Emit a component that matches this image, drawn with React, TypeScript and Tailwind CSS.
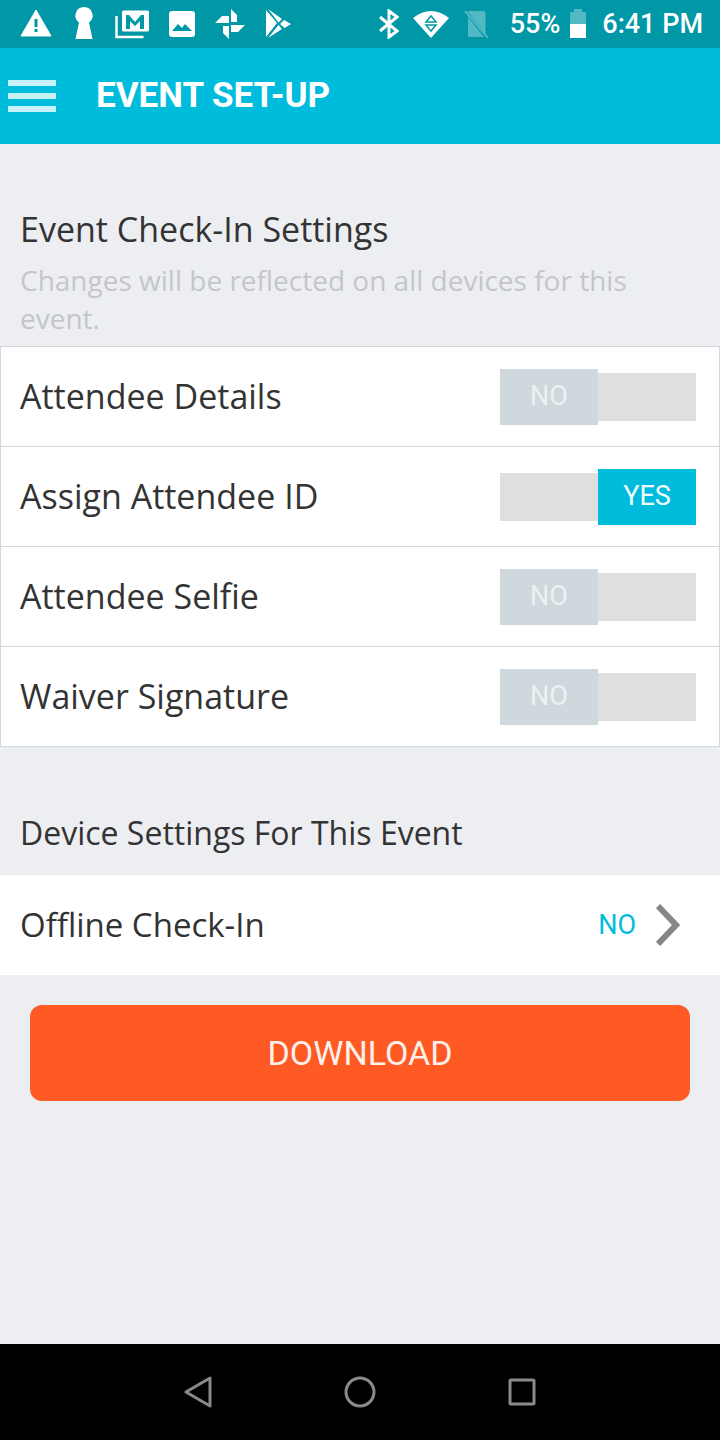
const sans = "font-['Open_Sans','Noto_Sans',sans-serif]";

function StatusIcons() {
  return (
    <div className="flex items-center">
      <svg width="32" height="30" viewBox="0 0 32 30" className="ml-[20px]">
        <path d="M16 1 31 27H1Z" fill="#fff" stroke="#fff" strokeLinejoin="round" />
        <rect x="14.5" y="10" width="3" height="8" fill="#0097a7" />
        <rect x="14.5" y="20" width="3" height="3" fill="#0097a7" />
      </svg>
      <svg width="20" height="34" viewBox="0 0 20 34" className="ml-[22px]">
        <path d="M10 0a8.5 8.5 0 0 1 5 15.4L18.500 32H1.500L5 15.400A8.500 8.500 0 0 1 10 0Z" fill="#fff" />
      </svg>
      <svg width="36" height="30" viewBox="0 0 36 30" className="ml-[21px]">
        <path d="M1.500 7v21h27" fill="none" stroke="#fff" strokeWidth="2.500" />
        <rect x="7" y="1.500" width="27" height="21" rx="1.500" fill="#fff" />
        <path d="M11 20V6h3l6 7 6-7h3v14h-4v-8l-5 5-5-5v8Z" fill="#0097a7" />
      </svg>
      <svg width="26" height="26" viewBox="0 0 26 26" className="ml-[18px]">
        <rect width="26" height="26" rx="3" fill="#fff" />
        <path d="M3 20l6-7 4 4 3-4 7 7Z" fill="#0097a7" />
      </svg>
      <svg width="30" height="30" viewBox="0 0 30 30" className="ml-[20px]">
        <path d="M0 14 7 7h7v7ZM16 0l6 6v7h-6ZM30 16l-7 7h-7v-7ZM14 30l-6-6v-7h6Z" fill="#fff" />
      </svg>
      <svg width="26" height="30" viewBox="0 0 26 30" className="ml-[20px]">
        <path d="M1 1 12 14 1 28ZM3 0l14 10-3.500 3.500ZM19 11l7 4-6.500 4-4.500-4ZM3 29l14-9-3.500-4Z" fill="#fff" />
      </svg>
    </div>
  );
}

function StatusRight() {
  return (
    <div className="flex items-center">
      <svg width="20" height="30" viewBox="0 0 20 30" fill="none" stroke="#fff" strokeWidth="3">
        <path d="M1 8l17 14-8 6V2l8 6L1 22" />
      </svg>
      <svg width="36" height="28" viewBox="0 0 36 28" className="ml-[14px]">
        <path d="M0 8Q18-6 36 8L18 28Z" fill="#fff" />
        <path d="M13 12l5-6 5 6ZM13 15l5 6 5-6Z" fill="none" stroke="#0097a7" strokeWidth="1.500" />
      </svg>
      <svg width="26" height="28" viewBox="0 0 26 28" className="ml-[15px]">
        <path d="M4 2a1.500 1.500 0 0 1 1.500-1H20a1.500 1.500 0 0 1 1.500 1.500v21ZM4 7v19a1 1 0 0 0 1 1h15Z" fill="#fff" fillOpacity="0.32" />
        <path d="M1 1l23 27" stroke="#fff" strokeOpacity="0.32" strokeWidth="2" />
      </svg>
      <span className="ml-[20px] font-['Roboto',sans-serif] text-[27px] font-medium text-white">55%</span>
      <svg width="16" height="30" viewBox="0 0 16 30" className="ml-[10px]">
        <path d="M4 0h8v3h4v12H0V3h4Z" fill="#fff" fillOpacity="0.32" />
        <rect y="15" width="16" height="14" fill="#fff" />
      </svg>
      <span className="ml-[16px] mr-[17px] font-['Roboto',sans-serif] text-[27px] font-medium text-white">6:41 PM</span>
    </div>
  );
}

function Toggle({ on }: { on: boolean }) {
  return (
    <div className="flex h-[56px] w-[196px] items-center">
      {on ? (
        <>
          <div className="h-[48px] w-[98px] bg-[#dfdfdf]" />
          <div className="flex h-[56px] w-[98px] items-center justify-center bg-[#00bcdc] font-['Roboto',sans-serif] text-[27px] text-[#f4fbfd]">YES</div>
        </>
      ) : (
        <>
          <div className="flex h-[56px] w-[98px] items-center justify-center bg-[#cfd8dc] font-['Roboto',sans-serif] text-[27px] text-[#eef1f2]">NO</div>
          <div className="h-[48px] w-[98px] bg-[#dfdfdf]" />
        </>
      )}
    </div>
  );
}

function Row({ label, on }: { label: string; on?: boolean }) {
  return (
    <div className="-mt-px flex h-[101px] items-center justify-between border border-[#cfd8dc] bg-white pl-[19px] pr-[23px] first:mt-0">
      <span className="text-[34px] text-[#333333]">{label}</span>
      <Toggle on={!!on} />
    </div>
  );
}

export default function App() {
  return (
    <div className={`flex h-[1440px] w-[720px] flex-col overflow-hidden bg-[#eceef2] ${sans}`}>
      <div className="flex h-[48px] shrink-0 items-center justify-between bg-[#0097a7]">
        <StatusIcons />
        <StatusRight />
      </div>

      <div className="flex h-[96px] shrink-0 items-center bg-[#00bcdc]">
        <div className="ml-[8px] flex w-[48px] flex-col gap-[7px]">
          <div className="h-[6px] bg-[#c9f1f8]" />
          <div className="h-[6px] bg-[#c9f1f8]" />
          <div className="h-[6px] bg-[#c9f1f8]" />
        </div>
        <h1 className="ml-[40px] font-['Roboto',sans-serif] text-[35px] font-bold text-white">EVENT SET-UP</h1>
      </div>

      <main className="flex flex-1 flex-col">
        <h2 className="mt-[62px] ml-[20px] text-[34px] leading-[46px] text-[#333333]">Event Check-In Settings</h2>
        <p className="mt-[9px] ml-[20px] mb-[9px] w-[660px] text-[28px] leading-[38px] text-[#c4c6c8]">
          Changes will be reflected on all devices for this event.
        </p>

        <div className="flex flex-col">
          <Row label="Attendee Details" />
          <Row label="Assign Attendee ID" on />
          <Row label="Attendee Selfie" />
          <Row label="Waiver Signature" />
        </div>

        <h2 className="mt-[64px] ml-[20px] text-[32px] leading-[44px] text-[#333333]">Device Settings For This Event</h2>

        <div className="mt-[20px] flex h-[100px] items-center justify-between bg-white pl-[20px] pr-[40px]">
          <span className="text-[33px] text-[#333333]">Offline Check-In</span>
          <div className="flex items-center">
            <span className="font-['Roboto',sans-serif] text-[27px] text-[#00bcdc]">NO</span>
            <svg width="24" height="42" viewBox="0 0 24 42" fill="none" stroke="#868686" strokeWidth="6" className="ml-[20px]">
              <path d="M2 2l18 19L2 40" />
            </svg>
          </div>
        </div>

        <button className="mx-[30px] mt-[30px] flex h-[96px] items-center justify-center rounded-[12px] bg-[#ff5a24] font-['Roboto',sans-serif] text-[34px] text-[#fdf1ec]">
          DOWNLOAD
        </button>
      </main>

      <nav className="flex h-[96px] shrink-0 items-center justify-center gap-[132px] bg-black">
        <svg width="28" height="32" viewBox="0 0 28 32" fill="none" stroke="#8a8a8a" strokeWidth="3" strokeLinejoin="round">
          <path d="M26 2v28L2 16Z" />
        </svg>
        <svg width="32" height="32" viewBox="0 0 32 32" fill="none" stroke="#8a8a8a" strokeWidth="3">
          <circle cx="16" cy="16" r="14" />
        </svg>
        <svg width="28" height="28" viewBox="0 0 28 28" fill="none" stroke="#8a8a8a" strokeWidth="3" strokeLinejoin="round">
          <rect x="2" y="2" width="24" height="24" rx="1" />
        </svg>
      </nav>
    </div>
  );
}
